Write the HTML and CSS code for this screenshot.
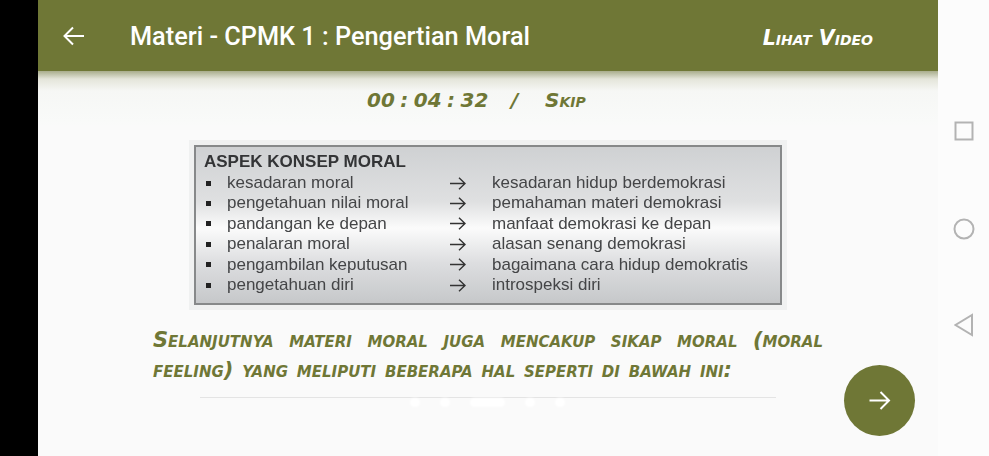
FILE: index.html
```html
<!DOCTYPE html>
<html lang="id">

<head>
  <meta charset="UTF-8">
  <meta name="viewport" content="width=device-width, initial-scale=1.0">
  <title>Materi - CPMK 1 : Pengertian Moral</title>
  <link rel="stylesheet" href="styles.css">
</head>

<body>
  <div class="edge"></div>

  <div class="app">
    <header class="topbar">
      <svg class="back-icon" width="24" height="24" viewBox="0 0 24 24">
        <path d="M22 12H2.500M11 3.500L2.500 12l8.500 8.500" />
      </svg>
      <h1 class="topbar-title">Materi - CPMK 1 : Pengertian Moral</h1>
      <a class="topbar-link">Lihat Video</a>
    </header>

    <main class="content">
      <div class="timer">
        <span class="timer-time">00 : 04 : 32</span>
        <span class="timer-sep">/</span>
        <span class="timer-skip">Skip</span>
      </div>

      <div class="slide-frame">
        <div class="slide">
          <div class="slide-title">ASPEK KONSEP MORAL</div>
          <ul class="slide-rows">
            <li><i class="bullet"></i><span>kesadaran moral</span><svg class="arrow" width="16" height="13" viewBox="0 0 16 13"><path d="M0 6.500h15M9 .8l6 5.700-6 5.700" /></svg><span>kesadaran hidup berdemokrasi</span></li>
            <li><i class="bullet"></i><span>pengetahuan nilai moral</span><svg class="arrow" width="16" height="13" viewBox="0 0 16 13"><path d="M0 6.500h15M9 .8l6 5.700-6 5.700" /></svg><span>pemahaman materi demokrasi</span></li>
            <li><i class="bullet"></i><span>pandangan ke depan</span><svg class="arrow" width="16" height="13" viewBox="0 0 16 13"><path d="M0 6.500h15M9 .8l6 5.700-6 5.700" /></svg><span>manfaat demokrasi ke depan</span></li>
            <li><i class="bullet"></i><span>penalaran moral</span><svg class="arrow" width="16" height="13" viewBox="0 0 16 13"><path d="M0 6.500h15M9 .8l6 5.700-6 5.700" /></svg><span>alasan senang demokrasi</span></li>
            <li><i class="bullet"></i><span>pengambilan keputusan</span><svg class="arrow" width="16" height="13" viewBox="0 0 16 13"><path d="M0 6.500h15M9 .8l6 5.700-6 5.700" /></svg><span>bagaimana cara hidup demokratis</span></li>
            <li><i class="bullet"></i><span>pengetahuan diri</span><svg class="arrow" width="16" height="13" viewBox="0 0 16 13"><path d="M0 6.500h15M9 .8l6 5.700-6 5.700" /></svg><span>introspeksi diri</span></li>
          </ul>
        </div>
      </div>

      <p class="lesson-text">Selanjutnya materi moral juga mencakup sikap moral (moral feeling) yang meliputi beberapa hal seperti di bawah ini:</p>

      <div class="pager">
        <span class="dot"></span>
        <span class="dot"></span>
        <span class="dot dot-active"></span>
        <span class="dot"></span>
        <span class="dot"></span>
      </div>
    </main>

    <button class="next-btn">
      <svg width="24" height="24" viewBox="0 0 24 24">
        <path d="M1.500 11.500H21M12.500 3l8.500 8.500-8.500 8.500" />
      </svg>
    </button>
  </div>

  <nav class="sysnav">
    <svg width="20" height="20" viewBox="0 0 20 20"><rect x="1.500" y="1.500" width="17" height="17" /></svg>
    <svg width="22" height="22" viewBox="0 0 22 22"><circle cx="11" cy="11" r="9.500" /></svg>
    <svg width="20" height="24" viewBox="0 0 20 24"><path d="M18 2v20L1.500 12z" /></svg>
  </nav>
</body>

</html>
```

FILE: styles.css
```css
* {
  box-sizing: border-box;
}

html,
body {
  height: 100%;
}

body {
  margin: 0;
  display: flex;
  overflow: hidden;
  background-color: #fafafa;
  font-family: "Roboto", sans-serif;
}

.edge {
  width: 38px;
  background-color: #000;
}

.app {
  position: relative;
  width: 900px;
  display: flex;
  flex-direction: column;
}

/* top bar */
.topbar {
  height: 71px;
  padding: 0 65px 0 24px;
  display: flex;
  align-items: center;
  flex-shrink: 0;
  background-color: #6f7736;
  color: #fff;
}

.back-icon {
  fill: none;
  stroke: #fff;
  stroke-width: 2;
  margin-right: 44px;
  flex-shrink: 0;
}

.topbar-title {
  margin: 0;
  padding-top: 2px;
  flex: 1;
  font-size: 25.3px;
  font-weight: 500;
}

.topbar-link,
.timer,
.lesson-text {
  font-family: "DejaVu Sans", sans-serif;
  font-style: oblique;
  font-weight: 700;
  font-variant: small-caps;
}

.topbar-link {
  font-size: 20.500px;
  padding-top: 4px;
}

/* content */
.content {
  flex: 1;
  display: flex;
  flex-direction: column;
  align-items: center;
  background: linear-gradient(#a9ad8c 0, #e4e5da 8px, #f6f7f5 20px, #f9faf9 50px, #fafafa 56px);
}

.timer {
  height: 58px;
  width: 100%;
  padding-left: 329px;
  display: flex;
  align-items: center;
  color: #6f7736;
  font-size: 20px;
}

.timer-time {
  width: 144px;
  word-spacing: -1.500px;
}

.timer-sep {
  width: 34px;
}

.slide-frame {
  margin-top: 11px;
  width: 598px;
  height: 170px;
  padding: 5px;
  background-color: #f0f1f1;
}

.slide {
  height: 160px;
  padding: 5px 8px 0;
  border: 2px solid #87898a;
  background: linear-gradient(#cfd1d3, #dfe0e1 35%, #fbfbfb 52%, #dcdddf 75%, #c6c8ca);
  color: #444547;
  font-family: "Liberation Sans", sans-serif;
  font-size: 17px;
  filter: blur(0.4px);
}

.slide-title {
  font-weight: 700;
  font-size: 17px;
  line-height: 19px;
  color: #333436;
}

.slide-rows {
  margin: 2px 0 0;
  padding: 0;
  list-style: none;
}

.slide-rows li {
  height: 20.4px;
  line-height: 20.4px;
  display: grid;
  grid-template-columns: 23px 223px 42px 1fr;
  align-items: center;
  white-space: nowrap;
}

.bullet {
  width: 5px;
  height: 5px;
  margin-left: 2px;
  background-color: #222;
}

.arrow {
  fill: none;
  stroke: #333;
  stroke-width: 1.4;
}

.lesson-text {
  margin: 15px 0 0;
  width: 670px;
  color: #6f7736;
  font-size: 21px;
  line-height: 30px;
  text-align: justify;
  word-spacing: 1.500px;
}

/* page dots */
.pager {
  margin-top: 12px;
  width: 576px;
  height: 14px;
  padding: 0 0 0 210px;
  display: flex;
  gap: 20px;
  border-top: 1px solid #e4e4e4;
}

.dot {
  width: 10px;
  height: 9px;
  border-radius: 5px;
  background-color: #fff;
  filter: blur(1px);
}

.dot-active {
  width: 35px;
}

/* next button */
.next-btn {
  position: absolute;
  left: 806px;
  top: 365px;
  width: 71px;
  height: 71px;
  padding: 0;
  display: flex;
  align-items: center;
  justify-content: center;
  border: none;
  border-radius: 50%;
  background-color: #6f7736;
}

.next-btn svg {
  fill: none;
  stroke: #fff;
  stroke-width: 2;
}

/* system nav */
.sysnav {
  flex: 1;
  padding: 121px 0 120px;
  display: flex;
  flex-direction: column;
  align-items: center;
  background-color: #fcfcfc;
}

.sysnav svg {
  fill: none;
  stroke: #b3b3b3;
  stroke-width: 2;
  flex-shrink: 0;
}

.sysnav svg:nth-child(2) {
  margin-top: 77px;
}

.sysnav svg:nth-child(3) {
  margin-top: 73px;
}
```
